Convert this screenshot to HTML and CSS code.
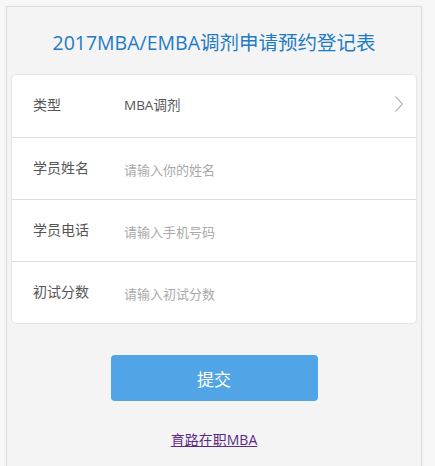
FILE: index.html
```html
<!DOCTYPE html>
<html lang="zh-CN">
<head>
  <meta charset="UTF-8" />
  <title>2017MBA/EMBA调剂申请预约登记表</title>
  <link rel="stylesheet" href="styles.css">
</head>
<body>
  <div class="panel">
    <h1>2017MBA/EMBA调剂申请预约登记表</h1>

    <div class="card">
      <div class="row">
        <span class="label">类型</span>
        <span class="value">MBA调剂</span>
        <svg class="arrow" width="10" height="18" viewBox="0 0 10 18">
          <polyline points="1.5,1.5 8.5,9 1.5,16.5" fill="none" stroke="#bbb" stroke-width="1.3" />
        </svg>
      </div>
      <div class="row">
        <span class="label">学员姓名</span>
        <input type="text" placeholder="请输入你的姓名">
      </div>
      <div class="row">
        <span class="label">学员电话</span>
        <input type="text" placeholder="请输入手机号码">
      </div>
      <div class="row">
        <span class="label">初试分数</span>
        <input type="text" placeholder="请输入初试分数">
      </div>
    </div>

    <div class="actions">
      <button class="btn-submit">提交</button>
    </div>
    <div class="footer">
      <a href="#">育路在职MBA</a>
    </div>
  </div>
</body>
</html>
```

FILE: styles.css
```css
html, body {
  margin: 0;
  height: 100%;
  overflow: hidden;
}
body {
  font-family: "Open Sans", "Noto Sans CJK SC", sans-serif;
  background-color: #f7f7f7;
  padding: 6px 0 0 6px;
  box-sizing: border-box;
}
.panel {
  width: 416px;
  min-height: 480px;
  box-sizing: border-box;
  background: #f4f4f4;
  border: 1px solid #dcdcdc;
  border-bottom: none;
  box-shadow: 0 0 3px rgba(0,0,0,0.06);
  padding: 0 5px;
}
.panel h1 {
  margin: 0;
  padding-top: 18px;
  height: 50px;
  line-height: 36px;
  font-size: 19.5px;
  font-weight: normal;
  text-align: center;
  color: #1e7bc4;
}
.card {
  background: white;
  border-radius: 4px;
  box-shadow: 0 0 2px rgba(0,0,0,0.2);
}
.row {
  display: flex;
  align-items: center;
  height: 62px;
  padding: 0 12px 0 21px;
  box-sizing: border-box;
  border-top: 1px solid #dddddd;
}
.row:first-child {
  border-top: none;
}
.label {
  width: 91px;
  font-size: 14px;
  color: #555;
  padding-bottom: 4px;
}
.value {
  flex: 1;
  font-size: 13.5px;
  color: #555;
  padding-bottom: 4px;
}
.row input {
  flex: 1;
  border: none;
  outline: none;
  padding: 0;
  font-family: inherit;
  font-size: 13px;
  color: #555;
  background: transparent;
  margin-top: 2px;
}
.row input::placeholder {
  color: #aaa;
}
.arrow {
  margin-bottom: 4px;
}
.actions {
  text-align: center;
  padding-top: 32px;
}
.btn-submit {
  width: 207px;
  height: 46px;
  border: none;
  border-radius: 4px;
  background-color: #51a4e6;
  color: white;
  font-family: inherit;
  font-size: 17px;
  cursor: pointer;
}
.footer {
  text-align: center;
  padding-top: 28px;
  font-size: 14px;
}
.footer a {
  color: #5b2a86;
}
```
